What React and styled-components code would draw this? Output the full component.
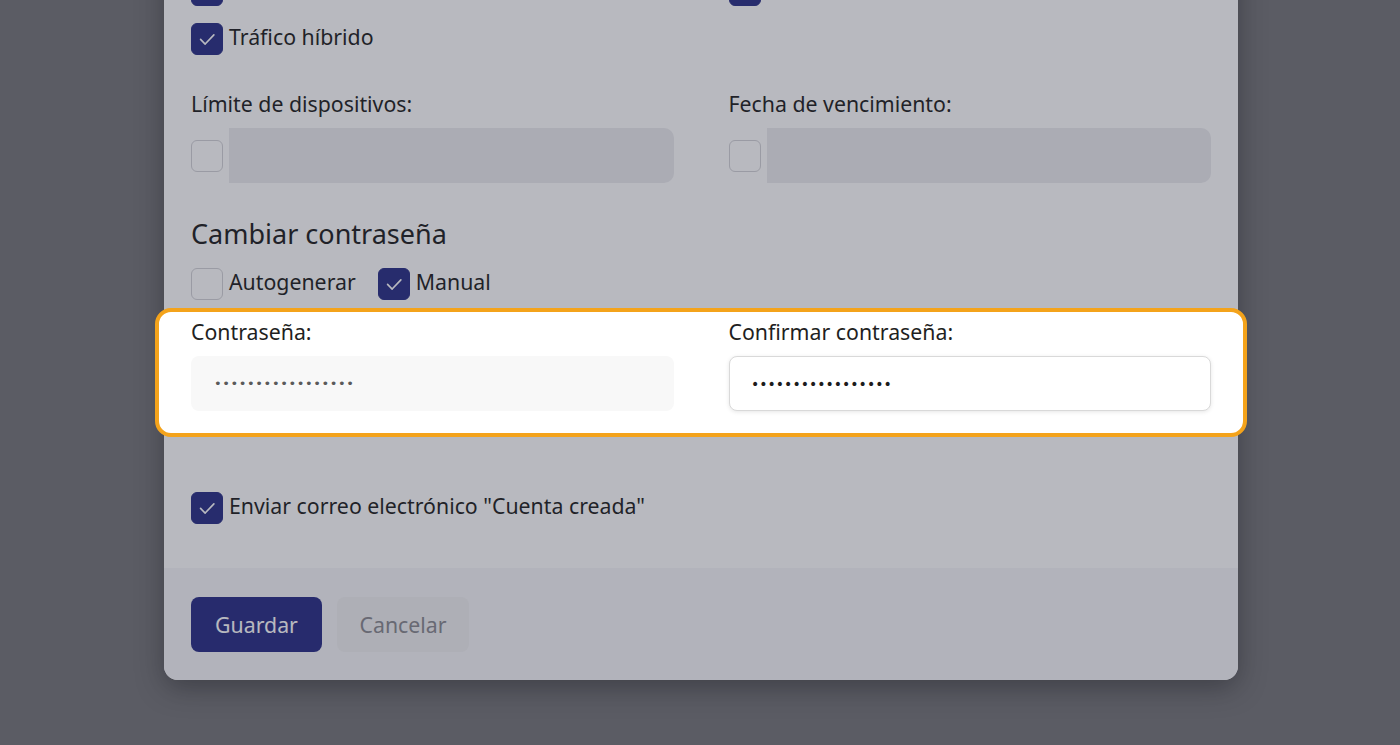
import React from "react";
import styled, { createGlobalStyle } from "styled-components";

const GlobalStyle = createGlobalStyle`
  html, body {
    margin: 0;
    padding: 0;
    height: 100%;
    overflow: hidden;
    background: #767679;
    font-family: "Noto Sans", "Open Sans", sans-serif;
    color: #1f1f22;
  }
  * { box-sizing: border-box; }
`;

const Page = styled.div`
  display: flex;
  justify-content: center;
  padding-left: 2px;
`;

const Modal = styled.div`
  width: 1074px;
  margin-top: -54px;
  background: #ffffff;
  border-radius: 14px;
  box-shadow: 0 8px 28px rgba(0, 0, 0, 0.35);
  display: flex;
  flex-direction: column;
`;

const Body = styled.div`
  padding: 28px 27px 44px;
  display: flex;
  flex-direction: column;
`;

const Grid = styled.div`
  display: grid;
  grid-template-columns: 1fr 1fr;
  column-gap: 55px;
  margin-top: ${(p) => p.$mt || 0}px;
`;

const Column = styled.div`
  display: flex;
  flex-direction: column;
  gap: ${(p) => p.$gap || 0}px;
`;

const CheckRow = styled.div`
  display: flex;
  align-items: flex-start;
  gap: 22px;
  margin-top: ${(p) => p.$mt || 0}px;
`;

const CheckItem = styled.label`
  display: inline-flex;
  align-items: flex-start;
  gap: 6px;
  font-size: 21.3px;
  line-height: 27px;
`;

const Box = styled.span`
  width: 32px;
  height: 32px;
  flex: none;
  border-radius: 6px;
  display: inline-flex;
  align-items: center;
  justify-content: center;
  background: ${(p) => (p.$checked ? "#2a3086" : "#ffffff")};
  border: 1.5px solid ${(p) => (p.$checked ? "#2a3086" : "#d3d3d7")};
`;

const FieldLabel = styled.div`
  font-size: 21.3px;
  line-height: 28px;
  color: #1f1f22;
`;

const DisabledRow = styled.div`
  display: flex;
  align-items: center;
  gap: 6px;
  height: 55px;
`;

const DisabledInput = styled.div`
  flex: 1;
  height: 55px;
  background: #ececef;
  border-radius: 0 10px 10px 0;
`;

const Heading = styled.h2`
  margin: 33px 0 0;
  font-size: 27px;
  line-height: 36px;
  font-weight: 400;
  color: #1f1f22;
`;

const Spotlight = styled.div`
  position: relative;
  z-index: 2;
  margin: 8px -36px 0;
  padding: 6px 32px 22px;
  background: #ffffff;
  border: 4px solid #f4a31b;
  border-radius: 16px;
  box-shadow: 0 0 0 3000px rgba(33, 36, 55, 0.32);
  display: grid;
  grid-template-columns: 1fr 1fr;
  column-gap: 55px;
`;

const PwField = styled.div`
  display: flex;
  flex-direction: column;
  gap: 10px;
`;

const PwInput = styled.div`
  height: 55px;
  border-radius: 8px;
  display: flex;
  align-items: center;
  padding-left: 23px;
  background: ${(p) => (p.$focused ? "#ffffff" : "#f8f8f8")};
  border: ${(p) => (p.$focused ? "1.5px solid #d9d9d9" : "none")};
  box-shadow: ${(p) => (p.$focused ? "0 1px 4px rgba(0,0,0,0.10)" : "none")};
`;

const Dots = styled.span`
  font-family: "DejaVu Sans", sans-serif;
  font-size: ${(p) => (p.$focused ? 14 : 13)}px;
  letter-spacing: ${(p) => (p.$focused ? 0.02 : 0.6)}px;
  color: ${(p) => (p.$focused ? "#1c1c1c" : "#5a5a5a")};
  line-height: 1;
  margin-left: ${(p) => (p.$focused ? -1.5 : 0)}px;
  -webkit-font-smoothing: antialiased;
`;

const Footer = styled.div`
  background: #f7f7f9;
  border-radius: 0 0 14px 14px;
  padding: 29px 27px 28px;
  display: flex;
  gap: 15px;
`;

const Button = styled.button`
  height: 55px;
  width: ${(p) => (p.$primary ? 131 : 132)}px;
  padding: 0;
  border-radius: 8px;
  border: none;
  font-family: "Noto Sans", sans-serif;
  font-size: 21.3px;
  background: ${(p) => (p.$primary ? "#2a2f86" : "#f0f0f2")};
  color: ${(p) => (p.$primary ? "#ffffff" : "#8a8a8f")};
`;

const Check = () => (
  <svg width="22" height="22" viewBox="0 0 24 24" fill="none" stroke="#fff" strokeWidth="1.8" strokeLinecap="round" strokeLinejoin="round">
    <polyline points="5 12.5 10 17.5 19.5 7.5" />
  </svg>
);

const Checkbox = ({ checked, label }) => (
  <Box $checked={checked} role="checkbox" aria-checked={!!checked} aria-label={label}>
    {checked && <Check />}
  </Box>
);

export default function App() {
  return (
    <>
      <GlobalStyle />
      <Page>
        <Modal>
          <Body>
            <Grid>
              <Column $gap={17}>
                <CheckItem>
                  <Checkbox checked label="Tráfico directo" />
                </CheckItem>
                <CheckItem>
                  <Checkbox checked /> Tráfico híbrido
                </CheckItem>
              </Column>
              <Column>
                <CheckItem>
                  <Checkbox checked label="Tráfico proxy" />
                </CheckItem>
              </Column>
            </Grid>

            <Grid $mt={35}>
              <Column $gap={10}>
                <FieldLabel>Límite de dispositivos:</FieldLabel>
                <DisabledRow>
                  <Checkbox />
                  <DisabledInput />
                </DisabledRow>
              </Column>
              <Column $gap={10}>
                <FieldLabel>Fecha de vencimiento:</FieldLabel>
                <DisabledRow>
                  <Checkbox />
                  <DisabledInput />
                </DisabledRow>
              </Column>
            </Grid>

            <Heading>Cambiar contraseña</Heading>
            <CheckRow $mt={16}>
              <CheckItem>
                <Checkbox /> Autogenerar
              </CheckItem>
              <CheckItem>
                <Checkbox checked /> Manual
              </CheckItem>
            </CheckRow>

            <Spotlight>
              <PwField>
                <FieldLabel>Contraseña:</FieldLabel>
                <PwInput>
                  <Dots>{"•".repeat(17)}</Dots>
                </PwInput>
              </PwField>
              <PwField>
                <FieldLabel>Confirmar contraseña:</FieldLabel>
                <PwInput $focused>
                  <Dots $focused>{"•".repeat(17)}</Dots>
                </PwInput>
              </PwField>
            </Spotlight>

            <CheckRow $mt={55}>
              <CheckItem>
                <Checkbox checked /> Enviar correo electrónico "Cuenta creada"
              </CheckItem>
            </CheckRow>
          </Body>
          <Footer>
            <Button $primary>Guardar</Button>
            <Button>Cancelar</Button>
          </Footer>
        </Modal>
      </Page>
    </>
  );
}
